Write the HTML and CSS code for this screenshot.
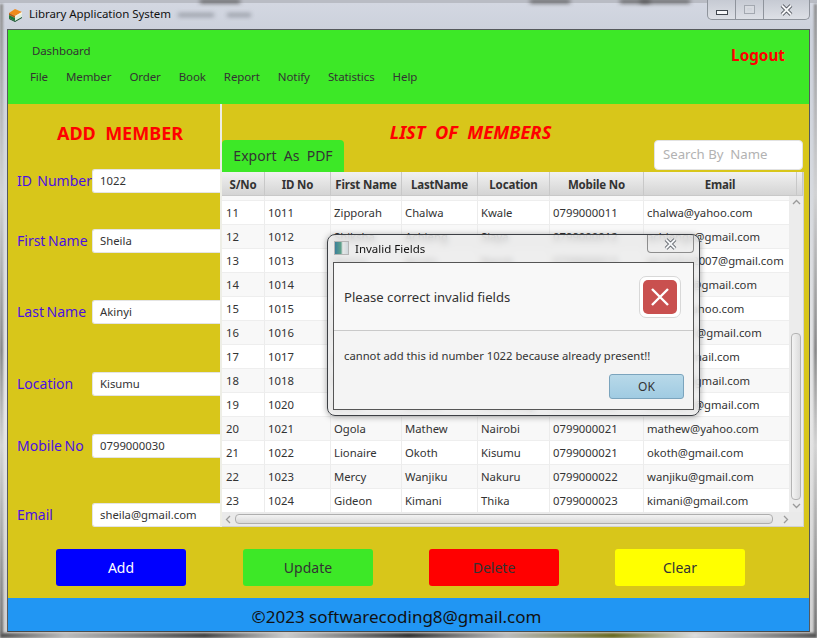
FILE: index.html
```html
<!DOCTYPE html>
<html lang="en">
<head>
<meta charset="utf-8">
<title>Library Application System</title>
<link rel="stylesheet" href="styles.css">
</head>
<body>
<div class="window">
  <div class="glass-top"><span class="smear s1"></span><span class="smear s2"></span><span class="smear s3"></span><span class="smear s4"></span><span class="smear s5"></span></div>
  <span class="glass-edge edge-left"></span>
  <span class="glass-edge edge-right"></span>
  <span class="behind b1"></span>
  <span class="behind b2"></span>
  <header class="titlebar">
    <svg class="app-icon" width="15" height="14" viewBox="0 0 15 14"><path d="M1 5 7 1l7 3-7 4z" fill="#f08a1c"/><path d="M1 5l6 3v2L1 7z" fill="#b85a10"/><path d="M7 8l7-4v2l-7 4z" fill="#f7f3df"/><path d="M1 7l6 3v3L1 10z" fill="#1f7a3a"/><path d="M7 10l7-4v3l-7 4z" fill="#dfeee0"/><path d="M7 13l7-4v1l-7 4zM1 10l6 3v1L1 11z" fill="#134f28"/></svg>
    <span class="app-title">Library Application System</span>
    <div class="win-controls">
      <span class="wc wc-min"><i class="min-glyph"></i></span>
      <span class="wc wc-max"><i class="max-glyph"></i></span>
      <span class="wc wc-close"><svg width="13" height="12" viewBox="0 0 13 12"><path d="M2 1.500l9 9M11 1.500l-9 9" stroke="#474c54" stroke-width="3.800"/><path d="M2 1.500l9 9M11 1.500l-9 9" stroke="#f7f8fa" stroke-width="2"/></svg></span>
    </div>
  </header>

  <main class="content">
    <section class="topbar">
      <div class="nav">
        <div class="dash">Dashboard</div>
        <nav class="menu"><span>File</span><span>Member</span><span>Order</span><span>Book</span><span>Report</span><span>Notify</span><span>Statistics</span><span>Help</span></nav>
      </div>
      <a class="logout">Logout</a>
    </section>

    <section class="workspace">
      <div class="split">
        <aside class="form-pane">
          <h2 class="form-title">ADD  MEMBER</h2>
          <div class="field f1"><label>ID  Number</label><div class="input">1022</div></div>
          <div class="field f2"><label>First Name</label><div class="input">Sheila</div></div>
          <div class="field f3"><label>Last Name</label><div class="input">Akinyi</div></div>
          <div class="field f4"><label>Location</label><div class="input">Kisumu</div></div>
          <div class="field f5"><label>Mobile No</label><div class="input">0799000030</div></div>
          <div class="field f6"><label>Email</label><div class="input">sheila@gmail.com</div></div>
        </aside>

        <div class="list-pane">
          <h2 class="list-title">LIST  OF  MEMBERS</h2>
          <div class="toolbar">
            <button class="export">Export  As  PDF</button>
            <div class="search">Search By  Name</div>
          </div>
          <div class="table-box">
            <table class="members">
              <colgroup><col class="c1"><col class="c2"><col class="c3"><col class="c4"><col class="c5"><col class="c6"><col class="c7"><col class="c8"></colgroup>
              <thead><tr><th>S/No</th><th>ID No</th><th>First Name</th><th>LastName</th><th>Location</th><th>Mobile No</th><th>Email</th><th></th></tr></thead>
              <tbody>
                <tr class="stub"><td></td><td></td><td></td><td></td><td></td><td></td><td></td><td></td></tr>
                <tr><td>11</td><td>1011</td><td>Zipporah</td><td>Chalwa</td><td>Kwale</td><td>0799000011</td><td>chalwa@yahoo.com</td><td></td></tr>
                <tr><td>12</td><td>1012</td><td>Shiksha</td><td>Achieng</td><td>Siaya</td><td>0799000012</td><td>achiengs@gmail.com</td><td></td></tr>
                <tr><td>13</td><td>1013</td><td>Nancy</td><td>Jeruto</td><td>Narok</td><td>0799000013</td><td>jerutoha2007@gmail.com</td><td></td></tr>
                <tr><td>14</td><td>1014</td><td>Hassan</td><td>Omar</td><td>Lamu</td><td>0799000014</td><td>hassano@gmail.com</td><td></td></tr>
                <tr><td>15</td><td>1015</td><td>Peter</td><td>Mutua</td><td>Kitui</td><td>0799000015</td><td>mutu@yahoo.com</td><td></td></tr>
                <tr><td>16</td><td>1016</td><td>Grace</td><td>Wambui</td><td>Nyeri</td><td>0799000016</td><td>wambui1@gmail.com</td><td></td></tr>
                <tr><td>17</td><td>1017</td><td>James</td><td>Kiprop</td><td>Eldoret</td><td>0799000017</td><td>kiprop@mail.com</td><td></td></tr>
                <tr><td>18</td><td>1018</td><td>Ruth</td><td>Nekesa</td><td>Bungoma</td><td>0799000018</td><td>nekesa@gmail.com</td><td></td></tr>
                <tr><td>19</td><td>1020</td><td>Brian</td><td>Otieno</td><td>Homa Bay</td><td>0799000020</td><td>otieno01@gmail.com</td><td></td></tr>
                <tr><td>20</td><td>1021</td><td>Ogola</td><td>Mathew</td><td>Nairobi</td><td>0799000021</td><td>mathew@yahoo.com</td><td></td></tr>
                <tr><td>21</td><td>1022</td><td>Lionaire</td><td>Okoth</td><td>Kisumu</td><td>0799000021</td><td>okoth@gmail.com</td><td></td></tr>
                <tr><td>22</td><td>1023</td><td>Mercy</td><td>Wanjiku</td><td>Nakuru</td><td>0799000022</td><td>wanjiku@gmail.com</td><td></td></tr>
                <tr><td>23</td><td>1024</td><td>Gideon</td><td>Kimani</td><td>Thika</td><td>0799000023</td><td>kimani@gmail.com</td><td></td></tr>
              </tbody>
            </table>
            <div class="vscroll">
              <svg class="arrow" width="9" height="6" viewBox="0 0 9 6"><path d="M1 5l3.500-3.500L8 5" fill="none" stroke="#9a9a9a" stroke-width="1.300"/></svg>
              <div class="vtrack"><div class="vthumb"></div></div>
              <svg class="arrow" width="9" height="6" viewBox="0 0 9 6"><path d="M1 1l3.500 3.500L8 1" fill="none" stroke="#9a9a9a" stroke-width="1.300"/></svg>
            </div>
            <div class="hscroll">
              <svg width="6" height="9" viewBox="0 0 6 9"><path d="M5 1 1.500 4.500 5 8" fill="none" stroke="#9a9a9a" stroke-width="1.300"/></svg>
              <div class="hthumb"></div>
              <svg width="6" height="9" viewBox="0 0 6 9"><path d="M1 1l3.500 3.500L1 8" fill="none" stroke="#9a9a9a" stroke-width="1.300"/></svg>
            </div>
          </div>
        </div>
      </div>

      <div class="actions">
        <button class="btn btn-add">Add</button>
        <button class="btn btn-update">Update</button>
        <button class="btn btn-delete">Delete</button>
        <button class="btn btn-clear">Clear</button>
      </div>
    </section>

    <footer class="footer">©2023 softwarecoding8@gmail.com</footer>
  </main>
  <div class="glass-bottom"></div>

  <div class="dialog" role="alertdialog">
    <div class="dlg-title">
      <span class="dlg-icon"></span>
      <span class="dlg-name">Invalid Fields</span>
      <span class="dlg-close"><svg width="13" height="12" viewBox="0 0 13 12"><path d="M2 1.500l9 9M11 1.500l-9 9" stroke="#555a61" stroke-width="3.800"/><path d="M2 1.500l9 9M11 1.500l-9 9" stroke="#f4f6f8" stroke-width="2"/></svg></span>
    </div>
    <div class="dlg-body">
      <div class="dlg-head">
        <span class="dlg-msg">Please correct invalid fields</span>
        <span class="err-icon"><svg width="34" height="34" viewBox="0 0 34 34"><rect width="34" height="34" rx="5" fill="#c9504f"/><path d="M9 9l16 16M25 9 9 25" stroke="#fff" stroke-width="2.400"/></svg></span>
      </div>
      <div class="dlg-content">cannot add this id number 1022 because already present!!</div>
      <div class="dlg-actions"><button class="ok">OK</button></div>
    </div>
  </div>
</div>
</body>
</html>
```
FILE: styles.css
```css
* { box-sizing: border-box; }
html, body { margin: 0; padding: 0; }
body { width: 817px; height: 638px; overflow: hidden; font-family: "Noto Sans", "Open Sans", sans-serif; background: #c9ced8; }

.window { position: relative; width: 817px; height: 638px; padding: 0 7px; overflow: hidden;
  background: linear-gradient(180deg, #d4d8e2 0, #ccd1dc 30px, #d7dadf 200px, #e6e6e6 420px, #cfcfcf 638px); }

.glass-top { position: absolute; left: 0; top: 0; right: 0; height: 3px; background: #b9bcc4; }
.smear { position: absolute; top: 0; height: 3px; background: #4a4a4a; filter: blur(2px); }
.s1 { left: 200px; width: 40px; }
.s2 { left: 530px; width: 40px; }
.s3 { left: 620px; width: 30px; }
.s4 { left: 640px; width: 50px; }
.s5 { left: 760px; width: 30px; }
.glass-edge { position: absolute; top: 4px; bottom: 4px; width: 3px; background: linear-gradient(180deg, #8a8a8a, #d0d0d0 30%, #777 55%, #cfcfcf 70%, #666 100%); filter: blur(1px); }
.edge-left { left: 0; }
.edge-right { right: 0; }
.behind { position: absolute; top: 13px; height: 4px; background: rgba(90, 95, 105, 0.45); filter: blur(2px); }
.b1 { left: 178px; width: 36px; }
.b2 { left: 227px; width: 24px; }

.titlebar { display: flex; align-items: center; height: 29px; position: relative; }
.app-icon { margin-left: 1px; flex: none; position: relative; top: 0; }
.app-title { margin-left: 6px; font-size: 11.500px; letter-spacing: -0.050px; color: #111; position: relative; top: -1px; }
.win-controls { position: absolute; right: 0; top: 0; display: flex; width: 103px; height: 20px; border: 1px solid #8f949c; border-top: 0; border-radius: 0 0 5px 5px; background: linear-gradient(180deg, #c6cad3, #dde0e6); }
.wc { display: flex; align-items: center; justify-content: center; border-right: 1px solid #8f949c; height: 100%; }
.wc-min { width: 28px; }
.wc-max { width: 28px; }
.wc-close { flex: 1; border-right: 0; }
.min-glyph { width: 12px; height: 5px; margin-top: 6px; background: #f6f7f9; border: 1px solid #40464e; }
.max-glyph { width: 11px; height: 9px; background: transparent; border: 1px solid #a3a8b0; box-shadow: inset 0 0 0 2px #d7dae0; }

.content { position: relative; display: flex; flex-direction: column; width: 803px; height: 603px; border: 1px solid #55595c; border-bottom-color: #444; background: #d8c61a; }

.topbar { display: flex; justify-content: space-between; height: 74px; background: #3de827; flex: none; }
.nav { padding: 0 0 0 22px; }
.dash { margin: 12px 0 0 2px; font-size: 11.500px; letter-spacing: -0.130px; line-height: 18px; color: #333; }
.menu { display: flex; gap: 18px; margin-top: 8px; font-size: 11.500px; letter-spacing: -0.100px; line-height: 18px; color: #333; }
.logout { margin: 15px 24px 0 0; font-size: 15.300px; line-height: 20px; font-weight: 700; color: #f00; }

.workspace { flex: 1; display: flex; flex-direction: column; }
.split { display: flex; height: 423px; flex: none; }
.form-pane { width: 214px; flex: none; padding: 0 0 0 9px; border-right: 2px solid #eeeee6; }
.form-title { margin: 17px 0 0 0; padding-left: 3px; text-align: center; white-space: pre; font-size: 18px; line-height: 24px; font-weight: 700; color: #f00; }

.field { display: flex; align-items: center; height: 24px; }
.field label { width: 75px; flex: none; margin-top: -2px; white-space: pre; font-size: 14px; word-spacing: -1px; color: #4b10e0; }
.f1 { margin-top: 24px; }
.f2 { margin-top: 36px; }
.f3 { margin-top: 47px; }
.f4 { margin-top: 48px; }
.f5 { margin-top: 38px; }
.f6 { margin-top: 45px; }
.input { flex: 1; height: 24px; padding-left: 7px; background: #fff; border: 1px solid #e4e4e4; border-right: 0; border-radius: 3px 0 0 3px; font-size: 11.300px; line-height: 22px; color: #333; }

.list-pane { flex: 1; min-width: 0; display: flex; flex-direction: column; }
.list-title { height: 16px; margin: 20px 0 0 0; padding-right: 90px; text-align: center; white-space: pre; font-size: 18.200px; line-height: 16px; font-style: italic; font-weight: 700; color: #f00; }
.toolbar { display: flex; justify-content: space-between; height: 32px; padding-right: 6px; flex: none; }
.export { width: 122px; height: 32px; padding: 0 0 2px 0; border: 0; border-radius: 4px 4px 0 0; background: #3de827; font: 14px "Noto Sans", sans-serif; white-space: pre; color: #333; }
.search { width: 149px; height: 30px; padding-left: 8px; background: #fff; border: 1px solid #e2e2e2; border-radius: 4px; font-size: 13.200px; line-height: 27px; white-space: pre; color: #b2b2b2; }

.table-box { position: relative; width: 582px; height: 355px; background: #f2f2f2; border: 1px solid #d2d2d2; border-left: 0; border-top: 0; }
.members { width: 581px; table-layout: fixed; border-collapse: separate; border-spacing: 0; font-size: 11.300px; color: #333; }
.c1 { width: 43px; } .c2 { width: 66px; } .c3 { width: 71px; } .c4 { width: 76px; } .c5 { width: 72px; } .c6 { width: 94px; } .c7 { width: 153px; } .c8 { width: 6px; }
.members th { height: 24px; padding: 1px 0 0 0; font-size: 11.500px; letter-spacing: -0.150px; font-weight: 700; color: #333; background: linear-gradient(180deg, #f1f1f1, #d4d4d4); border-right: 1px solid #c8c8c8; border-bottom: 1px solid #c8c8c8; }
.members td { height: 24px; padding: 0 0 0 3px; border-right: 1px solid #ececec; border-bottom: 1px solid #eeeeee; background: #fff; white-space: nowrap; overflow: hidden; }
.members td:first-child { padding-left: 4px; }
.members tbody tr:nth-child(odd) td { background: #f8f8f8; }
.members tbody tr:nth-child(even) td { background: #fff; }
.members tr.stub td { height: 5px; line-height: 1px; font-size: 1px; background: #f8f8f8; }

.vscroll { position: absolute; right: 0; top: 24px; bottom: 14px; width: 14px; display: flex; flex-direction: column; align-items: center; padding: 0 2px; background: #ececec; }
.arrow { flex: none; margin: 3px 0; }
.vtrack { flex: 1; width: 100%; display: flex; flex-direction: column; justify-content: flex-end; }
.vthumb { height: 167px; background: linear-gradient(90deg, #f4f4f4, #dcdcdc); border: 1px solid #b4b4b4; border-radius: 4px; }

.hscroll { position: absolute; left: 0; right: 0; bottom: 0; display: flex; align-items: center; height: 14px; padding-left: 3px; background: #eaeaea; }
.hthumb { width: 538px; height: 10px; margin: 0 10px 0 4px; background: linear-gradient(180deg, #f3f3f3, #d8d8d8); border: 1px solid #aeaeae; border-radius: 4px; }
.hscroll svg { flex: none; }

.actions { display: flex; gap: 56px; padding: 22px 0 0 48px; }
.btn { width: 130px; height: 37px; padding: 0; border: 0; border-radius: 3px; font: 14px "Noto Sans", sans-serif; color: #333; }
.btn-add { background: #0000ff; color: #fff; }
.btn-update { background: #3de827; margin-left: 1px; }
.btn-delete { background: #ff0000; }
.btn-clear { background: #ffff00; }

.footer { height: 33px; flex: none; padding-right: 24px; background: #2196f3; text-align: center; font-size: 17px; line-height: 38px; color: #111; }

.glass-bottom { position: absolute; left: 0; right: 0; bottom: 0; height: 5px; background: linear-gradient(90deg, #555 0, #bbb 8%, #444 25%, #ccc 35%, #333 50%, #bbb 62%, #6a6a20 75%, #ddd 85%, #555 100%); filter: blur(1px); }

.dialog { position: absolute; left: 327px; top: 234px; width: 373px; height: 182px; padding: 27px 5px 6px 5px; border: 1px solid #3c3f44; border-radius: 8px; background: rgba(232, 232, 232, 0.72); backdrop-filter: blur(3px); box-shadow: 0 1px 6px rgba(0,0,0,0.35); }
.dlg-title { position: absolute; left: 6px; right: 5px; top: 0; height: 26px; display: flex; align-items: center; }
.dlg-icon { width: 15px; height: 14px; background: linear-gradient(90deg, #3b7f9a 0, #5da08a 45%, #e8e8e8 60%, #cfd8dc 100%); border: 1px solid #b5b5b5; }
.dlg-name { margin-left: 6px; font-size: 11.500px; color: #111; }
.dlg-close { position: absolute; right: 0; top: 0; width: 47px; height: 18px; display: flex; align-items: center; justify-content: center; border: 1px solid #8d8d8d; border-top: 0; border-radius: 0 0 4px 4px; }
.dlg-body { height: 148px; display: flex; flex-direction: column; background: #f4f4f4; border: 1px solid #555; }
.dlg-head { display: flex; align-items: center; justify-content: space-between; height: 68px; flex: none; padding: 0 12px 0 10px; background: #f8f8f8; border-bottom: 1px solid #c9c9c9; }
.dlg-msg { font-size: 13.100px; color: #333; }
.err-icon { display: flex; width: 42px; height: 42px; align-items: center; justify-content: center; background: #fff; border: 1px solid #d8d8d8; border-radius: 7px; }
.dlg-content { margin: 17px 0 0 10px; font-size: 11.250px; line-height: 16px; color: #333; }
.dlg-actions { display: flex; justify-content: flex-end; padding: 10px 9px 0 0; }
.ok { width: 75px; height: 25px; padding: 0; border: 1px solid #7ba4bd; border-radius: 3px; background: linear-gradient(180deg, #b8d9e9, #a0cbe2); font: 12px "Noto Sans", sans-serif; color: #333; }
```
